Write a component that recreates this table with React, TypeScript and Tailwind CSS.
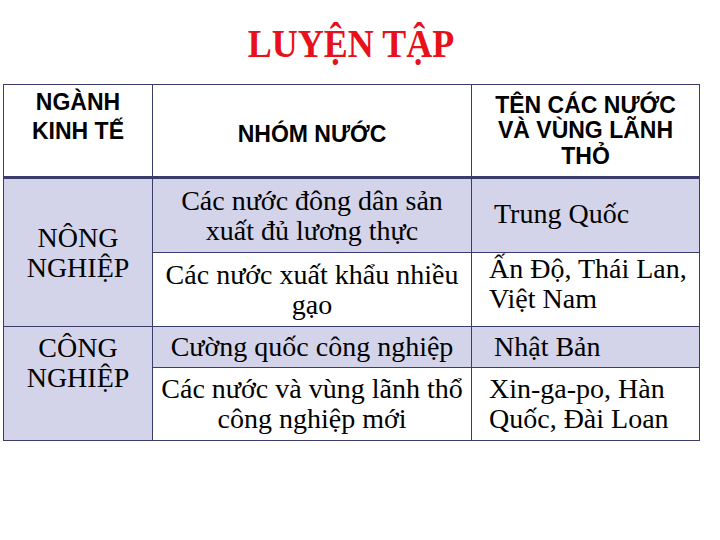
const serif = "font-['Liberation_Serif','Times_New_Roman',serif]";
const sans = "font-['Liberation_Sans',Arial,sans-serif]";

const App = () => {
  return (
    <div className="w-[720px] h-[540px] bg-white">
      <div className="ml-[3px] w-[696px]">
        <div className="h-[84px] pt-[26px] text-center">
          <h1
            className={`${serif} inline-block scale-y-110 text-[36px] leading-[36px] font-bold text-[#e8101a]`}
          >
            LUYỆN TẬP
          </h1>
        </div>

        <table className="w-[696px] table-fixed border-collapse text-black">
          <colgroup>
            <col className="w-[149px]" />
            <col className="w-[319px]" />
            <col className="w-[228px]" />
          </colgroup>
          <thead>
            <tr className={`${sans} h-[93px] text-[23px] font-bold`}>
              <th className="border border-[#3c3c6a] border-b-[3px] align-top pt-[3px] leading-[29px] font-bold">
                NGÀNH
                <br />
                KINH TẾ
              </th>
              <th className="border border-[#3c3c6a] border-b-[3px] align-middle pt-[8px] leading-[25px] font-bold">
                NHÓM NƯỚC
              </th>
              <th className="border border-[#3c3c6a] border-b-[3px] align-middle pt-[1px] leading-[25.5px] font-bold">
                TÊN CÁC NƯỚC
                <br />
                VÀ VÙNG LÃNH
                <br />
                THỎ
              </th>
            </tr>
          </thead>
          <tbody className={`${serif} text-[28px] leading-[30px]`}>
            <tr className="h-[75px] bg-[#d3d4ea]">
              <td
                rowSpan={2}
                className="border border-[#3c3c6a] bg-[#d3d4ea] text-center align-middle"
              >
                NÔNG
                <br />
                NGHIỆP
              </td>
              <td className="border border-[#3c3c6a] text-center align-middle">
                Các nước đông dân sản
                <br />
                xuất đủ lương thực
              </td>
              <td className="border border-[#3c3c6a] align-middle pl-[22px] pb-[4px]">
                Trung Quốc
              </td>
            </tr>
            <tr className="h-[74px] bg-white">
              <td className="border border-[#3c3c6a] text-center align-middle">
                Các nước xuất khẩu nhiều
                <br />
                gạo
              </td>
              <td className="border border-[#3c3c6a] align-top pl-[17px] pt-[1px]">
                Ấn Độ, Thái Lan,
                <br />
                Việt Nam
              </td>
            </tr>
            <tr className="h-[41px] bg-[#d3d4ea]">
              <td
                rowSpan={2}
                className="border border-[#3c3c6a] bg-[#d3d4ea] text-center align-top pt-[6px]"
              >
                CÔNG
                <br />
                NGHIỆP
              </td>
              <td className="border border-[#3c3c6a] text-center align-middle">
                Cường quốc công nghiệp
              </td>
              <td className="border border-[#3c3c6a] align-middle pl-[22px]">
                Nhật Bản
              </td>
            </tr>
            <tr className="h-[73px] bg-white">
              <td className="border border-[#3c3c6a] text-center align-middle">
                Các nước và vùng lãnh thổ
                <br />
                công nghiệp mới
              </td>
              <td className="border border-[#3c3c6a] align-middle pl-[17px]">
                Xin-ga-po, Hàn
                <br />
                Quốc, Đài Loan
              </td>
            </tr>
          </tbody>
        </table>
      </div>
    </div>
  );
};

export default App;
